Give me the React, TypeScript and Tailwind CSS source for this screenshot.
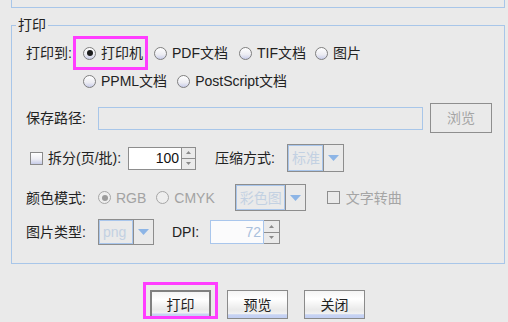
import React from 'react'

const FONT = "font-['Liberation_Sans','Noto_Sans_CJK_SC',sans-serif]"

function Radio({ checked = false, disabled = false }: { checked?: boolean; disabled?: boolean }) {
  return (
    <span
      className={`w-[13px] h-[13px] rounded-full border flex items-center justify-center shrink-0 ${
        disabled
          ? 'border-[#a6a6a6] bg-[#eeeeee]'
          : 'border-[#7f7f7f] bg-[linear-gradient(to_bottom,#ffffff_0%,#ececf2_60%,#c9cdea_100%)]'
      }`}
    >
      {checked && <span className={`w-[6px] h-[6px] rounded-full ${disabled ? 'bg-[#9b9b9b]' : 'bg-[#1c1c1c]'}`} />}
    </span>
  )
}

function Option({ label, checked, disabled, className = '' }: { label: string; checked?: boolean; disabled?: boolean; className?: string }) {
  return (
    <span className={`flex items-center gap-[5px] ${className}`}>
      <Radio checked={checked} disabled={disabled} />
      <span className={disabled ? 'text-[#a3a3a3]' : 'text-[#222]'}>{label}</span>
    </span>
  )
}

function Check({ disabled = false }: { disabled?: boolean }) {
  return (
    <span
      className={`block w-[13px] h-[13px] border shrink-0 ${
        disabled ? 'border-[#8e8e8e] bg-[#eaeaea]' : 'border-[#8a8a8a] bg-[linear-gradient(to_bottom,#ffffff_0%,#eeeef4_55%,#c6cbe8_100%)]'
      }`}
    />
  )
}

function Arrow() {
  return (
    <svg width="11" height="6" viewBox="0 0 11 6">
      <polygon points="0,0 11,0 5.5,6" fill="#8db5e6" />
    </svg>
  )
}

function Combo({ text, fieldW, h }: { text: string; fieldW: string; h: string }) {
  return (
    <div className={`flex border border-[#8d8d8d] ${h}`}>
      <div className={`${fieldW} h-full border-r border-[#8d8d8d] shadow-[inset_0_0_0_1px_#a9c6ec] flex items-center pl-[4px] text-[#c3d1e2]`}>
        {text}
      </div>
      <div className="w-[19px] h-full flex items-center justify-center">
        <Arrow />
      </div>
    </div>
  )
}

function SpinBtns({ w }: { w: string }) {
  return (
    <div className={`${w} h-full flex flex-col border border-l-0 border-[#8d8d8d]`}>
      <div className="flex-1 border-b border-[#8d8d8d] flex items-center justify-center">
        <svg width="5" height="3" viewBox="0 0 5 3"><polygon points="0,3 5,3 2.5,0" fill="#8a8a8a" /></svg>
      </div>
      <div className="flex-1 flex items-center justify-center">
        <svg width="5" height="3" viewBox="0 0 5 3"><polygon points="0,0 5,0 2.5,3" fill="#8a8a8a" /></svg>
      </div>
    </div>
  )
}

function Btn({ label, focused = false }: { label: string; focused?: boolean }) {
  return (
    <button
      className={`w-[61px] h-[29px] flex items-center justify-center text-[#222] bg-[linear-gradient(to_bottom,#f4f4f4_0%,#ffffff_30%,#e9e9e9_70%,#f1f1f1_84%,#c7d3f3_88%,#c2cff2_100%)] ${
        focused ? 'border-2 border-[#808080]' : 'border border-[#8a8a8a]'
      }`}
    >
      {label}
    </button>
  )
}

export default function App() {
  return (
    <div className={`w-[508px] h-[322px] bg-[#eaeaea] overflow-hidden text-[14px] leading-none ${FONT}`}>
      {/* panel above */}
      <div className="ml-[11px] w-[494px] h-[8px] border border-t-0 border-[#a8c6e9]" />

      {/* 打印 group */}
      <div className="relative ml-[11px] mt-[17px] w-[494px] h-[239px] border border-[#a8c6e9] pl-[14px]">
        <span className="absolute left-[4px] top-[-8px] px-[2px] bg-[#eaeaea] text-[#222]">打印</span>

        {/* 打印到 */}
        <div className="mt-[10px] h-[34px] flex items-center">
          <span className="w-[47px] text-[#222]">打印到:</span>
          <div className="w-[75px] h-[34px] border-[3px] border-[#ff3dff] flex items-center pl-[7px]">
            <Option label="打印机" checked />
          </div>
          <Option label="PDF文档" className="ml-[6px]" />
          <Option label="TIF文档" className="ml-[11px]" />
          <Option label="图片" className="ml-[9px]" />
        </div>
        <div className="mt-[2px] h-[18px] flex items-center pl-[57px]">
          <Option label="PPML文档" />
          <Option label="PostScript文档" className="ml-[10px]" />
        </div>

        {/* 保存路径 */}
        <div className="mt-[13px] h-[30px] flex items-center">
          <span className="w-[72px] text-[#222]">保存路径:</span>
          <div className="w-[325px] h-[23px] border border-[#a8c6e9]" />
          <div className="ml-[7px] w-[62px] h-[30px] border border-[#8e8e8e] flex items-center justify-center text-[#a5a5a5]">
            浏览
          </div>
        </div>

        {/* 拆分 / 压缩方式 */}
        <div className="mt-[11px] h-[28px] flex items-center">
          <div className="w-[102px] flex items-center">
            <span className="ml-[4px]"><Check /></span>
            <span className="ml-[5px] text-[#222]">拆分(页/批):</span>
          </div>
          <div className="flex h-[23px]">
            <div className="w-[54px] h-full bg-white border border-[#8d8d8d] flex items-center justify-end pr-[2px] text-[#111]">100</div>
            <SpinBtns w="w-[14px]" />
          </div>
          <span className="ml-[19px] w-[72px] text-[#222]">压缩方式:</span>
          <Combo text="标准" fieldW="w-[36px]" h="h-[28px]" />
        </div>

        {/* 颜色模式 */}
        <div className="mt-[12px] h-[27px] flex items-center">
          <span className="w-[72px] text-[#222]">颜色模式:</span>
          <Option label="RGB" checked disabled />
          <Option label="CMYK" disabled className="ml-[10px]" />
          <div className="ml-[20px]">
            <Combo text="彩色图" fieldW="w-[50px]" h="h-[27px]" />
          </div>
          <span className="ml-[21px]"><Check disabled /></span>
          <span className="ml-[6px] text-[#a5a5a5]">文字转曲</span>
        </div>

        {/* 图片类型 */}
        <div className="mt-[8px] h-[26px] flex items-center">
          <span className="w-[72px] text-[#222]">图片类型:</span>
          <Combo text="png" fieldW="w-[35px]" h="h-[26px]" />
          <span className="ml-[18px] w-[38px] text-[#222]">DPI:</span>
          <div className="flex h-[24px]">
            <div className="w-[54px] h-full bg-[#fbfbfc] border border-[#a9c6ec] flex items-center justify-end pr-[2px] text-[#a9c0dc]">72</div>
            <SpinBtns w="w-[16px]" />
          </div>
        </div>
      </div>

      {/* buttons */}
      <div className="mt-[26px] pl-[150px] flex gap-[16px]">
        <div className="relative">
          <Btn label="打印" focused />
          <div className="absolute left-[-7px] top-[-8px] w-[75px] h-[37px] border-[3px] border-[#ff3dff] pointer-events-none" />
        </div>
        <Btn label="预览" />
        <Btn label="关闭" />
      </div>
    </div>
  )
}
